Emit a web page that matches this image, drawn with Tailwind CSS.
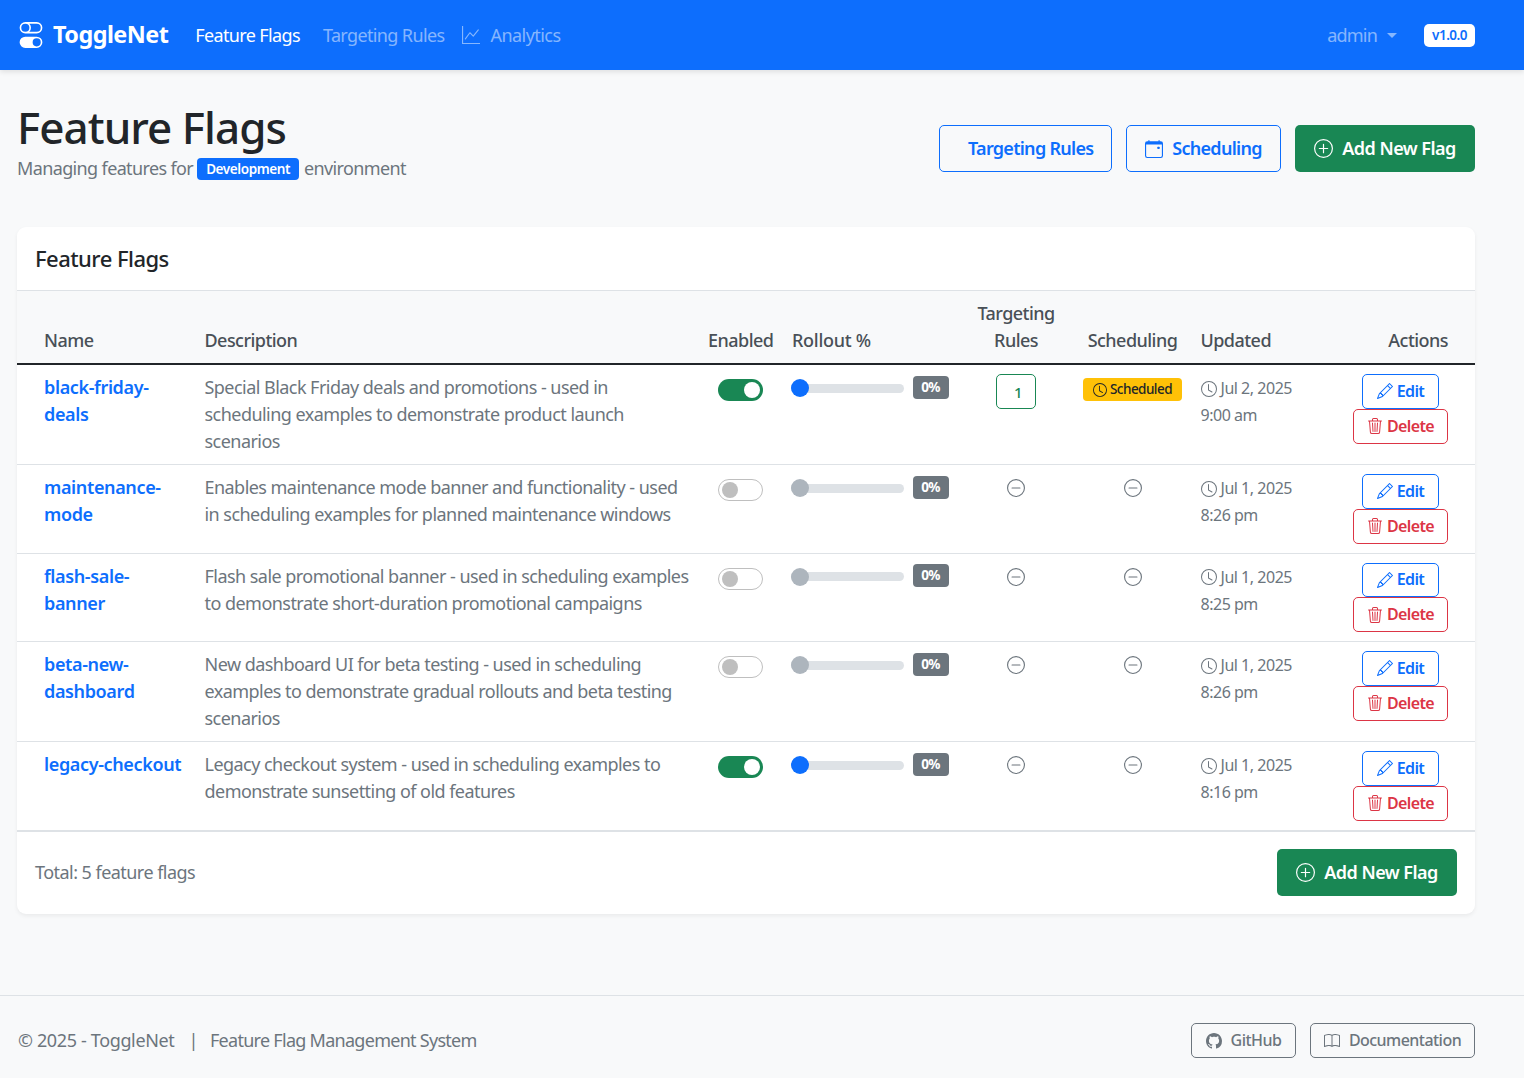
<!DOCTYPE html>
<html lang="en">

<head>
    <meta charset="UTF-8">
    <meta name="viewport" content="width=device-width, initial-scale=1.0">
    <script src="https://cdn.jsdelivr.net/npm/@tailwindcss/browser@4"></script>
    <title>ToggleNet - Feature Flags</title>
</head>

<body class="bg-[#f8f9fa] text-[18px] leading-[27px] text-[#212529] tracking-[-0.03em] font-['Noto_Sans',sans-serif]">
    <svg class="hidden">
        <symbol id="i-toggles" viewBox="0 0 16 16"><path fill="currentColor" d="M4.5 9a3.5 3.5 0 1 0 0 7h7a3.5 3.5 0 1 0 0-7h-7zm7 6a2.5 2.5 0 1 1 0-5 2.5 2.5 0 0 1 0 5zm-7-14a2.5 2.5 0 1 0 0 5 2.5 2.5 0 0 0 0-5zm2.45 0A3.49 3.49 0 0 1 8 3.5 3.49 3.49 0 0 1 6.95 6h4.55a2.5 2.5 0 0 0 0-5H6.95zM4.5 0h7a3.5 3.5 0 1 1 0 7h-7a3.5 3.5 0 1 1 0-7z"/></symbol>
        <symbol id="i-graph" viewBox="0 0 16 16"><path fill="currentColor" d="M0 0h1v15h15v1H0V0Zm14.817 3.113a.5.5 0 0 1 .07.704l-4.5 5.5a.5.5 0 0 1-.74.037L7.06 6.767l-3.656 5.027a.5.5 0 0 1-.808-.588l4-5.5a.5.5 0 0 1 .758-.06l2.609 2.61 4.15-5.073a.5.5 0 0 1 .704-.07Z"/></symbol>
        <symbol id="i-calendar" viewBox="0 0 16 16"><path fill="currentColor" d="M11 6.5a.5.5 0 0 1 .5-.5h1a.5.5 0 0 1 .5.5v1a.5.5 0 0 1-.5.5h-1a.5.5 0 0 1-.5-.5v-1z"/><path fill="currentColor" d="M3.5 0a.5.5 0 0 1 .5.5V1h8V.5a.5.5 0 0 1 1 0V1h1a2 2 0 0 1 2 2v11a2 2 0 0 1-2 2H2a2 2 0 0 1-2-2V3a2 2 0 0 1 2-2h1V.5a.5.5 0 0 1 .5-.5zM1 4v10a1 1 0 0 0 1 1h12a1 1 0 0 0 1-1V4H1z"/></symbol>
        <symbol id="i-plus" viewBox="0 0 16 16"><path fill="currentColor" d="M8 15A7 7 0 1 1 8 1a7 7 0 0 1 0 14zm0 1A8 8 0 1 0 8 0a8 8 0 0 0 0 16z"/><path fill="currentColor" d="M8 4a.5.5 0 0 1 .5.5v3h3a.5.5 0 0 1 0 1h-3v3a.5.5 0 0 1-1 0v-3h-3a.5.5 0 0 1 0-1h3v-3A.5.5 0 0 1 8 4z"/></symbol>
        <symbol id="i-dash" viewBox="0 0 16 16"><path fill="currentColor" d="M8 15A7 7 0 1 1 8 1a7 7 0 0 1 0 14zm0 1A8 8 0 1 0 8 0a8 8 0 0 0 0 16z"/><path fill="currentColor" d="M4 8a.5.5 0 0 1 .5-.5h7a.5.5 0 0 1 0 1h-7A.5.5 0 0 1 4 8z"/></symbol>
        <symbol id="i-clock" viewBox="0 0 16 16"><path fill="currentColor" d="M8 3.5a.5.5 0 0 0-1 0V9a.5.5 0 0 0 .252.434l3.5 2a.5.5 0 0 0 .496-.868L8 8.71V3.5z"/><path fill="currentColor" d="M8 16A8 8 0 1 0 8 0a8 8 0 0 0 0 16zm7-8A7 7 0 1 1 1 8a7 7 0 0 1 14 0z"/></symbol>
        <symbol id="i-pencil" viewBox="0 0 16 16"><path fill="currentColor" d="M12.146.146a.5.5 0 0 1 .708 0l3 3a.5.5 0 0 1 0 .708l-10 10a.5.5 0 0 1-.168.11l-5 2a.5.5 0 0 1-.65-.65l2-5a.5.5 0 0 1 .11-.168l10-10zM11.207 2.5 13.5 4.793 14.793 3.5 12.5 1.207 11.207 2.5zm1.586 3L10.5 3.207 4 9.707V10h.5a.5.5 0 0 1 .5.5v.5h.5a.5.5 0 0 1 .5.5v.5h.293l6.5-6.5zm-9.761 5.175-.106.106-1.528 3.821 3.821-1.528.106-.106A.5.5 0 0 1 5 12.5V12h-.5a.5.5 0 0 1-.5-.5V11h-.5a.5.5 0 0 1-.468-.325z"/></symbol>
        <symbol id="i-trash" viewBox="0 0 16 16"><path fill="currentColor" d="M6.5 1h3a.5.5 0 0 1 .5.5v1H6v-1a.5.5 0 0 1 .5-.5ZM11 2.5v-1A1.5 1.5 0 0 0 9.5 0h-3A1.5 1.5 0 0 0 5 1.5v1H2.506a.58.58 0 0 0-.01 0H1.5a.5.5 0 0 0 0 1h.538l.853 10.66A2 2 0 0 0 4.885 16h6.23a2 2 0 0 0 1.994-1.84l.853-10.66h.538a.5.5 0 0 0 0-1h-.995a.59.59 0 0 0-.01 0H11Zm1.958 1-.846 10.58a1 1 0 0 1-.997.92h-6.23a1 1 0 0 1-.997-.92L3.042 3.5h9.916Zm-7.487 1a.5.5 0 0 1 .528.47l.5 8.5a.5.5 0 0 1-.998.06L5 5.03a.5.5 0 0 1 .47-.53Zm5.058 0a.5.5 0 0 1 .47.53l-.5 8.5a.5.5 0 1 1-.998-.06l.5-8.5a.5.5 0 0 1 .528-.47ZM8 4.5a.5.5 0 0 1 .5.5v8.5a.5.5 0 0 1-1 0V5a.5.5 0 0 1 .5-.5Z"/></symbol>
        <symbol id="i-github" viewBox="0 0 16 16"><path fill="currentColor" d="M8 0C3.58 0 0 3.58 0 8c0 3.54 2.29 6.53 5.47 7.59.4.07.55-.17.55-.38 0-.19-.01-.82-.01-1.49-2.01.37-2.53-.49-2.69-.94-.09-.23-.48-.94-.82-1.13-.28-.15-.68-.52-.01-.53.63-.01 1.08.58 1.23.82.72 1.21 1.87.87 2.33.66.07-.52.28-.87.51-1.07-1.78-.2-3.64-.89-3.64-3.95 0-.87.31-1.59.82-2.15-.08-.2-.36-1.02.08-2.12 0 0 .67-.21 2.2.82.64-.18 1.32-.27 2-.27.68 0 1.36.09 2 .27 1.53-1.04 2.2-.82 2.2-.82.44 1.1.16 1.92.08 2.12.51.56.82 1.27.82 2.15 0 3.07-1.87 3.75-3.65 3.95.29.25.54.73.54 1.48 0 1.07-.01 1.93-.01 2.2 0 .21.15.46.55.38A8.012 8.012 0 0 0 16 8c0-4.42-3.58-8-8-8z"/></symbol>
        <symbol id="i-book" viewBox="0 0 16 16"><path fill="currentColor" d="M1 2.828c.885-.37 2.154-.769 3.388-.893 1.33-.134 2.458.063 3.112.752v9.746c-.935-.53-2.12-.603-3.213-.493-1.18.12-2.37.461-3.287.811V2.828zm7.5-.141c.654-.689 1.782-.886 3.112-.752 1.234.124 2.503.523 3.388.893v9.923c-.918-.35-2.107-.692-3.287-.81-1.094-.111-2.278-.039-3.213.492V2.687zM8 1.783C7.015.936 5.587.81 4.287.94c-1.514.153-3.042.672-3.994 1.105A.5.5 0 0 0 0 2.5v11a.5.5 0 0 0 .707.455c.882-.4 2.303-.881 3.68-1.02 1.409-.142 2.59.087 3.223.877a.5.5 0 0 0 .78 0c.633-.79 1.814-1.019 3.222-.877 1.378.139 2.8.62 3.681 1.02A.5.5 0 0 0 16 13.5v-11a.5.5 0 0 0-.293-.455c-.952-.433-2.48-.952-3.994-1.105C10.413.809 8.985.936 8 1.783z"/></symbol>
    </svg>

    <div class="flex flex-col min-h-[1078px]">
        <nav class="h-[70px] bg-[#0d6efd] flex items-center pl-[18px] pr-[49px] shadow-[0_2px_5px_rgba(0,0,0,0.1)]">
            <a class="flex items-center gap-[9px] text-white font-bold text-[23.4px] mr-[27px] pb-[1px]" href="#">
                <svg class="w-[26px] h-[26px]"><use href="#i-toggles"></use></svg>
                ToggleNet
            </a>
            <a class="text-white tracking-[-0.035em]" href="#">Feature Flags</a>
            <a class="text-white/50 ml-[23px] tracking-[-0.035em]" href="#">Targeting Rules</a>
            <a class="text-white/50 ml-[18px] flex items-center gap-[10px]" href="#">
                <svg class="w-[18px] h-[18px]"><use href="#i-graph"></use></svg>
                Analytics
            </a>
            <a class="text-white/50 ml-auto flex items-center gap-[10px] tracking-[-0.045em]" href="#">
                admin
                <span class="border-x-[5px] border-x-transparent border-t-[5px] border-t-white/50"></span>
            </a>
            <span class="ml-[27px] bg-white text-[#0d6efd] rounded-[5px] h-[23px] w-[51px] flex items-center justify-center text-[13.5px] font-semibold">v1.0.0</span>
        </nav>

        <main class="flex-1 pl-[17px] pr-[49px]">
            <div class="flex items-start justify-between pt-[30px] pb-[45px]">
                <div>
                    <h1 class="text-[44px] leading-[54px] font-medium tracking-[-0.022em]">Feature Flags</h1>
                    <p class="text-[#6c757d] flex items-center gap-[4px] mt-[1px] tracking-[-0.035em]">
                        Managing features for
                        <span class="bg-[#0d6efd] text-white text-[13.5px] font-semibold leading-[22px] rounded-[4px] px-[9px] tracking-[-0.03em]">Development</span>
                        <span class="ml-[1px]">environment</span>
                    </p>
                </div>
                <div class="flex gap-[14px] text-[18px] font-semibold mt-[25px] tracking-[-0.04em]">
                    <a class="h-[47px] w-[173px] pl-[28px] flex items-center border border-[#0d6efd] text-[#0d6efd] rounded-[5px]" href="#">Targeting Rules</a>
                    <a class="h-[47px] w-[155px] flex items-center justify-center gap-[9px] border border-[#0d6efd] text-[#0d6efd] rounded-[5px]" href="#">
                        <svg class="w-[18px] h-[18px]"><use href="#i-calendar"></use></svg>
                        Scheduling
                    </a>
                    <a class="h-[47px] w-[180px] flex items-center justify-center gap-[9px] bg-[#198754] text-white rounded-[5px] tracking-[-0.03em]" href="#">
                        <svg class="w-[19px] h-[19px]"><use href="#i-plus"></use></svg>
                        Add New Flag
                    </a>
                </div>
            </div>

            <section class="bg-white rounded-[9px] shadow-[0_2px_4px_rgba(0,0,0,0.06)] overflow-hidden">
                <div class="h-[64px] px-[18px] flex items-center border-b border-[#dee2e6] text-[22px] font-medium">Feature Flags</div>
                <table class="w-full table-fixed border-collapse">
                    <colgroup>
                        <col class="w-[178.5px]"><col class="w-[504px]"><col class="w-[82.5px]"><col class="w-[178.5px]">
                        <col class="w-[111px]"><col class="w-[122px]"><col class="w-[151.5px]"><col class="w-[130px]">
                    </colgroup>
                    <thead class="bg-[#f8f9fa] text-[#495057] border-b-2 border-[#212529]">
                        <tr class="align-bottom">
                            <th class="font-medium text-left py-[9px] pl-[27px] pr-[9px]">Name</th>
                            <th class="font-medium text-left p-[9px]">Description</th>
                            <th class="font-medium text-center py-[9px]">Enabled</th>
                            <th class="font-medium text-left py-[9px] pl-[10px] pr-[9px] tracking-[-0.015em]">Rollout %</th>
                            <th class="font-medium text-center px-[15px] py-[9px]">Targeting Rules</th>
                            <th class="font-medium text-center py-[9px]">Scheduling</th>
                            <th class="font-medium text-left py-[9px] pl-[7px] pr-[9px]">Updated</th>
                            <th class="font-medium text-right py-[9px] pr-[27px]">Actions</th>
                        </tr>
                    </thead>
                    <tbody id="flags"></tbody>
                </table>
                <div class="border-t-2 border-[#dee2e6] h-[84.5px] px-[18px] pb-[1px] flex items-center justify-between">
                    <span class="text-[#6c757d]">Total: 5 feature flags</span>
                    <a class="h-[47px] w-[180px] flex items-center justify-center gap-[9px] bg-[#198754] text-white rounded-[5px] text-[18px] font-semibold tracking-[-0.03em]" href="#">
                        <svg class="w-[19px] h-[19px]"><use href="#i-plus"></use></svg>
                        Add New Flag
                    </a>
                </div>
            </section>
        </main>

        <footer class="h-[83px] border-t border-[#dee2e6] pl-[18px] pr-[49px] pt-[7px] flex items-center justify-between text-[#6c757d]">
            <span class="flex tracking-[-0.02em]">
                <span>© 2025 - ToggleNet</span>
                <span class="ml-[14px]">|</span>
                <span class="ml-[12px] tracking-[-0.04em]">Feature Flag Management System</span>
            </span>
            <div class="flex gap-[14px] text-[16px] font-medium">
                <a class="h-[35px] w-[105px] flex items-center justify-center gap-[9px] border border-[#6c757d] rounded-[5px]" href="#">
                    <svg class="w-[16px] h-[16px]"><use href="#i-github"></use></svg>
                    GitHub
                </a>
                <a class="h-[35px] w-[165px] flex items-center justify-center gap-[9px] border border-[#6c757d] rounded-[5px]" href="#">
                    <svg class="w-[16px] h-[16px]"><use href="#i-book"></use></svg>
                    Documentation
                </a>
            </div>
        </footer>
    </div>

    <script>
        const flags = [
            { name: 'black-friday-deals', desc: 'Special Black Friday deals and promotions - used in scheduling examples to demonstrate product launch scenarios', on: true, rules: 1, scheduled: true, date: 'Jul 2, 2025', time: '9:00 am' },
            { name: 'maintenance-mode', desc: 'Enables maintenance mode banner and functionality - used in scheduling examples for planned maintenance windows', on: false, date: 'Jul 1, 2025', time: '8:26 pm' },
            { name: 'flash-sale-banner', desc: 'Flash sale promotional banner - used in scheduling examples to demonstrate short-duration promotional campaigns', on: false, date: 'Jul 1, 2025', time: '8:25 pm' },
            { name: 'beta-new-dashboard', desc: 'New dashboard UI for beta testing - used in scheduling examples to demonstrate gradual rollouts and beta testing scenarios', on: false, date: 'Jul 1, 2025', time: '8:26 pm' },
            { name: 'legacy-checkout', desc: 'Legacy checkout system - used in scheduling examples to demonstrate sunsetting of old features', on: true, date: 'Jul 1, 2025', time: '8:16 pm' },
        ];

        const dash = `<svg class="w-[18px] h-[18px] mx-auto mt-[5px] text-[#6c757d]"><use href="#i-dash"></use></svg>`;

        let rows = '';
        for (const f of flags) {
            const toggle = f.on
                ? `<span class="w-[45px] h-[22px] rounded-full bg-[#198754] flex items-center justify-end px-[3px]"><span class="w-[16px] h-[16px] rounded-full bg-white"></span></span>`
                : `<span class="w-[45px] h-[22px] rounded-full bg-white border border-[#bfbfbf] flex items-center px-[3px]"><span class="w-[16px] h-[16px] rounded-full bg-[#bfbfbf]"></span></span>`;
            const thumb = f.on ? 'bg-[#0d6efd]' : 'bg-[#adb5bd]';
            rows += `
            <tr class="border-b border-[#dee2e6] last:border-b-0 align-top">
                <td class="py-[9px] pl-[27px] pr-[9px] font-semibold text-[#0d6efd] tracking-[-0.02em]">${f.name}</td>
                <td class="p-[9px] text-[#6c757d]">${f.desc}</td>
                <td class="py-[14px]"><div class="flex justify-center">${toggle}</div></td>
                <td class="py-[10px] pl-[9px] pr-[12px]">
                    <div class="flex items-center gap-[9px] h-[24px]">
                        <div class="relative w-[113px] h-[9px] mt-[2px] rounded-full bg-[#dee2e6]">
                            <span class="absolute left-0 top-[-4.5px] w-[18px] h-[18px] rounded-full ${thumb}"></span>
                        </div>
                        <span class="w-[36px] h-[23px] rounded-[4px] bg-[#6c757d] text-white text-[13.5px] font-bold flex items-center justify-center">0%</span>
                    </div>
                </td>
                <td class="py-[9px]">${f.rules ? `<span class="block w-[40px] h-[35px] mx-auto pl-[4px] border border-[#198754] rounded-[5px] text-[#198754] text-[15px] font-medium leading-[35px] text-center">${f.rules}</span>` : dash}</td>
                <td class="py-[9px]">${f.scheduled ? `<span class="mt-[4px] mx-auto w-[99px] h-[23px] rounded-[4px] bg-[#ffc107] text-[13.5px] font-medium flex items-center justify-center gap-[3px]"><svg class="w-[14px] h-[14px]"><use href="#i-clock"></use></svg>Scheduled</span>` : dash}</td>
                <td class="pt-[10px] pb-[8px] pl-[7px] pr-[9px] text-[#6c757d] text-[16px] tracking-[-0.03em]">
                    <div class="flex items-center gap-[4px]"><svg class="w-[16px] h-[16px]"><use href="#i-clock"></use></svg>${f.date}</div>
                    <div>${f.time}</div>
                </td>
                <td class="py-[9px] pr-[27px]">
                    <div class="w-[95px] ml-auto flex flex-col items-center text-[16px] font-semibold tracking-[-0.04em]">
                        <a class="w-[77px] h-[34.75px] flex items-center justify-center gap-[4px] border border-[#0d6efd] rounded-[5px] text-[#0d6efd]" href="#"><svg class="w-[16px] h-[16px]"><use href="#i-pencil"></use></svg>Edit</a>
                        <a class="w-[95px] h-[34.75px] flex items-center justify-center gap-[4px] border border-[#dc3545] rounded-[5px] text-[#dc3545]" href="#"><svg class="w-[16px] h-[16px]"><use href="#i-trash"></use></svg>Delete</a>
                    </div>
                </td>
            </tr>`;
        }
        document.querySelector('#flags').innerHTML = rows;
    </script>
</body>

</html>
